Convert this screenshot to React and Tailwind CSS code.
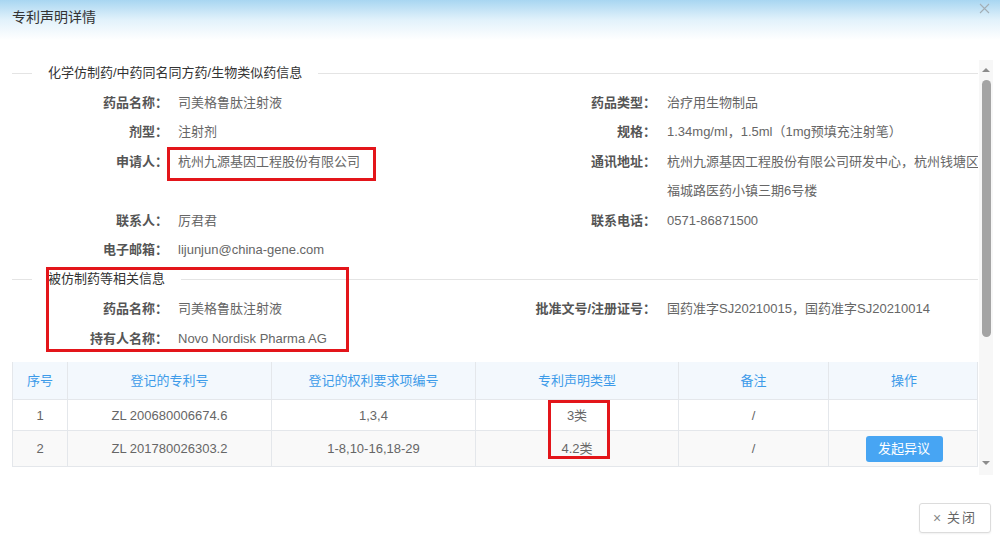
import React from "react";

const font = "font-['Liberation_Sans','Noto_Sans_CJK_SC',sans-serif]";

const applicant = [
  ["药品名称：", "司美格鲁肽注射液", "药品类型：", "治疗用生物制品"],
  ["剂型：", "注射剂", "规格：", "1.34mg/ml，1.5ml（1mg预填充注射笔）"],
  [
    "申请人：",
    "杭州九源基因工程股份有限公司",
    "通讯地址：",
    ["杭州九源基因工程股份有限公司研发中心，杭州钱塘区", "福城路医药小镇三期6号楼"],
  ],
  ["联系人：", "厉君君", "联系电话：", "0571-86871500"],
  ["电子邮箱：", "lijunjun@china-gene.com", "", ""],
];

const reference = [
  ["药品名称：", "司美格鲁肽注射液", "批准文号/注册证号：", "国药准字SJ20210015，国药准字SJ20210014"],
  ["持有人名称：", "Novo Nordisk Pharma AG", "", ""],
];

const patents = [
  { no: "1", patent: "ZL 200680006674.6", claims: "1,3,4", type: "3类", note: "/", action: false },
  { no: "2", patent: "ZL 201780026303.2", claims: "1-8,10-16,18-29", type: "4.2类", note: "/", action: true },
];

function Legend({ title }) {
  return (
    <div className="flex h-[26px] items-center">
      <div className="h-px w-[20px] bg-[#e4e4e4]" />
      <span className="px-[16px] text-[13px] leading-[26px] text-[#333]">{title}</span>
      <div className="h-px flex-1 bg-[#e4e4e4]" />
    </div>
  );
}

function InfoGrid({ rows }) {
  return (
    <div className="mt-[2px] grid grid-cols-[156px_332px_156px_1fr] text-[13px] leading-[29.4px]">
      {rows.map((r, i) => (
        <React.Fragment key={i}>
          <div className="text-right font-bold text-[#555]">{r[0]}</div>
          <div className="pl-[10px] whitespace-nowrap text-[#666]">{r[1]}</div>
          <div className="text-right font-bold text-[#555] whitespace-nowrap">{r[2]}</div>
          <div className="pl-[11px] whitespace-nowrap text-[#666]">
            {Array.isArray(r[3]) ? r[3].map((l) => <div key={l}>{l}</div>) : r[3]}
          </div>
        </React.Fragment>
      ))}
    </div>
  );
}

function PatentTable() {
  const cols = "grid grid-cols-[55px_204px_204px_203px_150px_150px]";
  const heads = ["序号", "登记的专利号", "登记的权利要求项编号", "专利声明类型", "备注", "操作"];
  return (
    <div className="mt-[9px] border-l border-r border-[#e4e7eb] text-[13px]">
      <div className={`${cols} h-[38px] border-b border-[#e4e7eb] bg-[#f3f8fd] text-[#3d9be9]`}>
        {heads.map((h, i) => (
          <div
            key={h}
            className={`flex items-center justify-center ${i < 5 ? "border-r border-[#e4e7eb]" : ""}`}
          >
            {h}
          </div>
        ))}
      </div>
      {patents.map((p, idx) => {
        const cells = [p.no, p.patent, p.claims, p.type, p.note];
        return (
          <div
            key={p.no}
            className={`${cols} border-b border-[#e4e7eb] text-[#666] ${
              idx === 1 ? "h-[36px] bg-[#f9f9f9]" : "h-[31px] bg-white"
            }`}
          >
            {cells.map((c, i) => (
              <div key={i} className="flex items-center justify-center border-r border-[#e4e7eb]">
                {c}
              </div>
            ))}
            <div className="flex items-center justify-center">
              {p.action && (
                <button className="h-[26px] w-[77px] rounded-[3px] bg-[#47a5f3] text-[13px] text-white">
                  发起异议
                </button>
              )}
            </div>
          </div>
        );
      })}
    </div>
  );
}

function Scrollbar() {
  return (
    <div className="ml-[1px] flex h-[415px] w-[14px] flex-col items-center bg-[#f7f7f7]">
      <div className="mt-[8px] h-0 w-0 border-x-[4px] border-b-[4px] border-x-transparent border-b-[#8c8c8c]" />
      <div className="mt-[8px] h-[257px] w-[9px] rounded-full bg-[#a4a4a4]" />
      <div className="mt-auto mb-[10px] h-0 w-0 border-x-[4px] border-t-[4px] border-x-transparent border-t-[#8c8c8c]" />
    </div>
  );
}

function RedBox({ className }) {
  return <div className={`pointer-events-none absolute border-[3px] border-[#e3151a] ${className}`} />;
}

export default function App() {
  return (
    <div className={`relative h-[540px] w-[1000px] overflow-hidden bg-white ${font}`}>
      <div className="flex h-[40px] items-start justify-between bg-linear-to-b from-[#a8d6f1] via-[#e2f2fb] to-white px-[12px]">
        <span className="text-[14px] leading-[34px] text-[#333]">专利声明详情</span>
        <svg width="11" height="11" viewBox="0 0 11 11" className="mt-[3px] mr-[-2px]">
          <path d="M1 1L10 10M10 1L1 10" stroke="#a3aeb5" strokeWidth="1.1" fill="none" />
        </svg>
      </div>

      <div className="mt-[20px] flex pl-[12px]">
        <div className="h-[415px] w-[966px] overflow-hidden">
          <Legend title="化学仿制药/中药同名同方药/生物类似药信息" />
          <InfoGrid rows={applicant} />
          <div className="mt-[2px]">
            <Legend title="被仿制药等相关信息" />
          </div>
          <InfoGrid rows={reference} />
          <PatentTable />
        </div>
        <Scrollbar />
      </div>

      <div className="mt-[28px] flex justify-end pr-[9px]">
        <button className="flex h-[30px] w-[72px] items-center justify-center gap-[6px] rounded-[3px] border border-[#dcdcdc] bg-white text-[13px] text-[#666] shadow-[0_1px_2px_rgba(0,0,0,0.06)]">
          <span className="text-[14px] text-[#888]">×</span>
          <span className="tracking-[2px]">关闭</span>
        </button>
      </div>

      <RedBox className="left-[167px] top-[147px] h-[34px] w-[209px]" />
      <RedBox className="left-[46px] top-[267px] h-[85px] w-[303px]" />
      <RedBox className="left-[548px] top-[400px] h-[59px] w-[62px]" />
    </div>
  );
}
